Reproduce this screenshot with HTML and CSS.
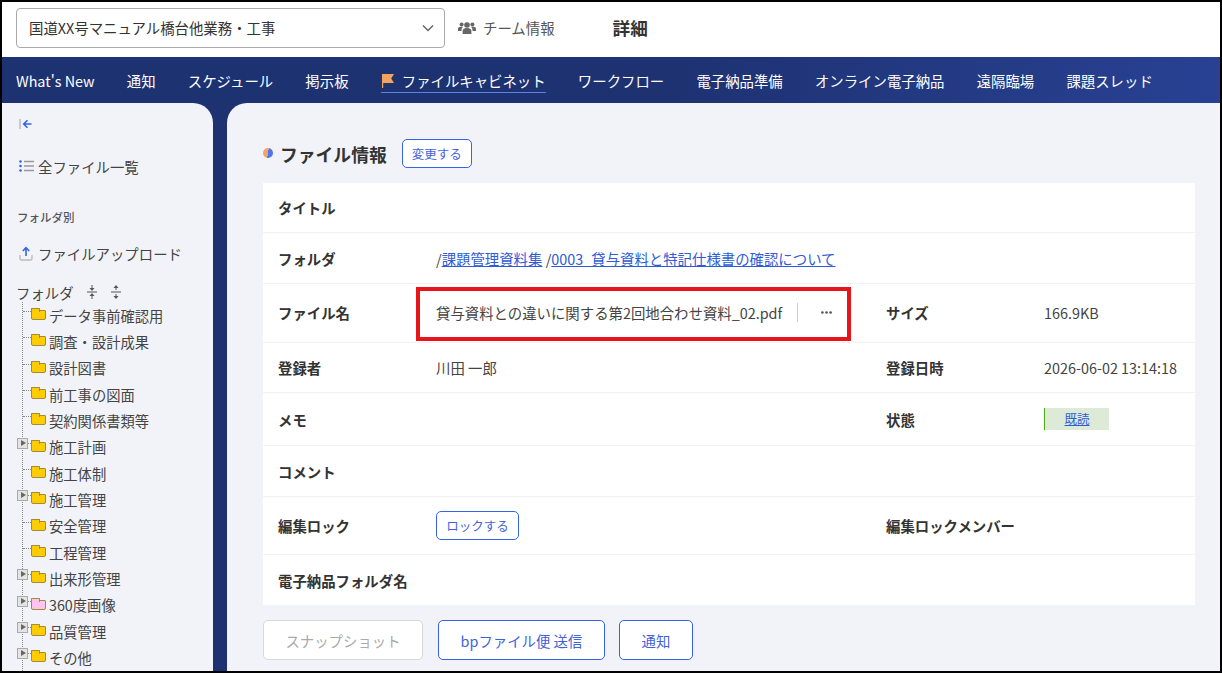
FILE: index.html
```html
<!DOCTYPE html>
<html lang="ja">
<head>
    <meta charset="UTF-8" />
    <title>詳細</title>
    <link rel="stylesheet" href="styles.css">
</head>
<body>
    <header class="topbar">
        <div class="project-select">
            <span>国道XX号マニュアル橋台他業務・工事</span>
            <svg class="chevron" width="12" height="8" viewBox="0 0 12 8"><path d="M1 1.500l5 5 5-5" fill="none" stroke="#666" stroke-width="1.500"/></svg>
        </div>
        <a class="team-link">
            <svg width="18" height="14" viewBox="0 0 18 14" fill="#666"><circle cx="9" cy="4" r="2.800"/><circle cx="3.600" cy="3.600" r="2"/><circle cx="14.400" cy="3.600" r="2"/><path d="M4.600 13V10c0-2 1.600-3 4.400-3s4.400 1 4.400 3v3z"/><path d="M0 10V8c0-1.300 1-2.200 3-2.200.7 0 1.300.1 1.800.3C3.900 6.900 3.500 8 3.500 10z"/><path d="M18 10V8c0-1.300-1-2.200-3-2.200-.7 0-1.300.1-1.800.3.900.8 1.300 1.900 1.300 3.900z"/></svg>
            チーム情報
        </a>
        <h1 class="page-title">詳細</h1>
    </header>

    <nav class="mainnav">
        <a>What's New</a>
        <a>通知</a>
        <a>スケジュール</a>
        <a>掲示板</a>
        <a class="active">
            <svg width="14" height="14" viewBox="0 0 14 14"><path d="M1 0h1.200v14H1z" fill="#f5a25d"/><path d="M2 0h11l-2.800 4.500L13 9H2z" fill="#f5a25d"/></svg>
            ファイルキャビネット
        </a>
        <a>ワークフロー</a>
        <a>電子納品準備</a>
        <a>オンライン電子納品</a>
        <a>遠隔臨場</a>
        <a>課題スレッド</a>
    </nav>

    <div class="content">
        <aside class="sidebar">
            <svg class="collapse" width="14" height="12" viewBox="0 0 14 12"><path d="M1 1v10" stroke="#bbb" stroke-width="1.500"/><path d="M12.500 6H5M8.500 2.200L4.700 6l3.800 3.800" fill="none" stroke="#3563e9" stroke-width="1.600"/></svg>

            <a class="side-link all-files">
                <svg width="15" height="12" viewBox="0 0 15 12"><g fill="#3563e9"><circle cx="1.500" cy="1.500" r="1.300"/><circle cx="1.500" cy="6" r="1.300"/><circle cx="1.500" cy="10.500" r="1.300"/></g><path d="M5 1.500h10M5 6h10M5 10.500h10" stroke="#999" stroke-width="1.300"/></svg>
                全ファイル一覧
            </a>

            <div class="side-heading">フォルダ別</div>

            <a class="side-link upload">
                <svg width="14" height="15" viewBox="0 0 14 15"><path d="M1 9v3.500c0 1 .6 1.500 1.500 1.500h9c.9 0 1.500-.5 1.500-1.500V9" fill="none" stroke="#bbb" stroke-width="1.400"/><path d="M7 10V2M3.800 5L7 1.600 10.200 5" fill="none" stroke="#3563e9" stroke-width="1.600"/></svg>
                ファイルアップロード
            </a>

            <div class="tree-head">
                フォルダ
                <svg width="12" height="14" viewBox="0 0 12 14"><path d="M1 7h10" stroke="#555"/><path d="M6 0v4M6 14v-4" stroke="#555"/><path d="M3.500 3L6 6l2.500-3zM3.500 11L6 8l2.500 3z" fill="#555"/></svg>
                <svg width="12" height="14" viewBox="0 0 12 14"><path d="M1 7h10" stroke="#555"/><path d="M6 2v3M6 12V9" stroke="#555"/><path d="M3.500 3L6 0l2.500 3zM3.500 11L6 14l2.500-3z" fill="#555"/></svg>
            </div>

            <ul class="tree">
                <li class="tree-item"><i class="folder"></i>データ事前確認用</li>
                <li class="tree-item"><i class="folder"></i>調査・設計成果</li>
                <li class="tree-item"><i class="folder"></i>設計図書</li>
                <li class="tree-item"><i class="folder"></i>前工事の図面</li>
                <li class="tree-item"><i class="folder"></i>契約関係書類等</li>
                <li class="tree-item"><i class="toggle"></i><i class="folder"></i>施工計画</li>
                <li class="tree-item"><i class="folder"></i>施工体制</li>
                <li class="tree-item"><i class="toggle"></i><i class="folder"></i>施工管理</li>
                <li class="tree-item"><i class="folder"></i>安全管理</li>
                <li class="tree-item"><i class="folder"></i>工程管理</li>
                <li class="tree-item"><i class="toggle"></i><i class="folder"></i>出来形管理</li>
                <li class="tree-item"><i class="toggle"></i><i class="folder pink"></i>360度画像</li>
                <li class="tree-item"><i class="toggle"></i><i class="folder"></i>品質管理</li>
                <li class="tree-item"><i class="toggle"></i><i class="folder"></i>その他</li>
            </ul>
        </aside>

        <main class="panel">
            <div class="section-head">
                <span class="dot"></span>
                <h2>ファイル情報</h2>
                <button class="btn btn-small">変更する</button>
            </div>

            <div class="info">
                <div class="row h49">
                    <div class="label">タイトル</div>
                </div>
                <div class="row h50">
                    <div class="label">フォルダ</div>
                    <div class="value span3">/<a href="#">課題管理資料集</a> /<a href="#">0003_貸与資料と特記仕様書の確認について</a></div>
                </div>
                <div class="row h58">
                    <div class="label">ファイル名</div>
                    <div class="value file-cell">
                        <span class="file-name">貸与資料との違いに関する第2回地合わせ資料_02.pdf</span>
                        <svg class="more" width="11" height="3" viewBox="0 0 11 3" fill="#555"><circle cx="1.400" cy="1.500" r="1.300"/><circle cx="5.500" cy="1.500" r="1.300"/><circle cx="9.600" cy="1.500" r="1.300"/></svg>
                        <span class="red-box"></span>
                    </div>
                    <div class="label">サイズ</div>
                    <div class="value">166.9KB</div>
                </div>
                <div class="row h49">
                    <div class="label">登録者</div>
                    <div class="value">川田 一郎</div>
                    <div class="label">登録日時</div>
                    <div class="value">2026-06-02 13:14:18</div>
                </div>
                <div class="row h52">
                    <div class="label">メモ</div>
                    <div class="value"></div>
                    <div class="label">状態</div>
                    <div class="value"><a class="status" href="#">既読</a></div>
                </div>
                <div class="row h50">
                    <div class="label">コメント</div>
                </div>
                <div class="row h57">
                    <div class="label">編集ロック</div>
                    <div class="value"><button class="btn btn-lock">ロックする</button></div>
                    <div class="label">編集ロックメンバー</div>
                </div>
                <div class="row h49 last">
                    <div class="label">電子納品フォルダ名</div>
                </div>
            </div>

            <div class="actions">
                <button class="btn btn-action snapshot">スナップショット</button>
                <button class="btn btn-action send">bpファイル便 送信</button>
                <button class="btn btn-action notify">通知</button>
            </div>
        </main>
    </div>
</body>
</html>
```

FILE: styles.css
```css
* {
    box-sizing: border-box;
}
html, body {
    margin: 0;
    height: 673px;
    overflow: hidden;
}
body {
    font-family: "Noto Sans CJK JP", "Noto Sans", sans-serif;
    font-size: 14.4px;
    color: #333;
    background: #fff;
    border: 2px solid #000;
    display: flex;
    flex-direction: column;
}
a {
    color: inherit;
    text-decoration: none;
}

/* top bar */
.topbar {
    height: 55px;
    flex: none;
    display: flex;
    align-items: center;
    padding: 0 0 4px 14px;
}
.project-select {
    width: 429px;
    height: 40px;
    border: 1px solid #aaa;
    border-radius: 4px;
    padding: 0 10px 0 12px;
    display: flex;
    align-items: center;
    justify-content: space-between;
}
.team-link {
    margin-left: 13px;
    display: flex;
    align-items: center;
    gap: 7px;
    color: #555;
}
.page-title {
    margin: 0 0 0 58px;
    font-size: 17.6px;
    font-weight: 700;
}

/* main navigation */
.mainnav {
    height: 46px;
    flex: none;
    display: flex;
    align-items: center;
    gap: 32.200px;
    padding: 0 0 0 14px;
    background: linear-gradient(90deg, #1d3271 0%, #1e3272 55%, #284193 100%);
    color: #fff;
}
.mainnav a.active {
    display: flex;
    align-items: center;
    gap: 7px;
    border-bottom: 1px solid #5c82e8;
    height: 24px;
    margin-top: 2px;
}

/* below nav */
.content {
    flex: 1;
    min-height: 0;
    display: flex;
    gap: 14px;
    background: #1e3272;
}
.sidebar {
    width: 211px;
    flex: none;
    background: #f1f3f8;
    border-top-right-radius: 20px;
    padding: 14px 0 0 15px;
    overflow: hidden;
}
.collapse {
    display: block;
    margin: 1px 0 0 2px;
}
.side-link {
    display: flex;
    align-items: center;
    gap: 4px;
    height: 20px;
    color: #444;
}
.all-files {
    margin: 26px 0 0 2px;
}
.side-heading {
    margin-top: 31px;
    height: 20px;
    line-height: 20px;
    font-size: 11.500px;
    font-weight: 500;
    color: #555;
}
.upload {
    margin: 16px 0 0 2px;
}
.upload svg {
    margin-right: 1px;
}
.tree-head {
    margin: 19px 0 0 -1px;
    height: 20px;
    display: flex;
    align-items: center;
    gap: 12px;
    color: #444;
}
.tree {
    list-style: none;
    margin: 0 0 0 5px;
    padding: 0 0 0 8px;
    border-left: 1px dotted #888;
}
.tree-item {
    height: 26.340px;
    display: flex;
    align-items: center;
    position: relative;
    font-size: 14.300px;
    color: #444;
    white-space: nowrap;
}
.tree-item::before {
    content: "";
    position: absolute;
    left: -8px;
    top: 9px;
    width: 8px;
    border-top: 1px dotted #888;
}
.toggle {
    position: absolute;
    left: -14px;
    top: 4px;
    width: 11px;
    height: 11px;
    border: 1px solid #aaa;
    background: #e4e4e4;
    z-index: 1;
}
.toggle::before {
    content: "";
    position: absolute;
    left: 2.500px;
    top: 1px;
    border-left: 5px solid #666;
    border-top: 3.500px solid transparent;
    border-bottom: 3.500px solid transparent;
}
.folder {
    width: 15px;
    height: 10px;
    margin: 0 3px 0 0;
    background: #ffcc00;
    border: 1px solid #a08c3c;
    border-radius: 0 1px 2px 2px;
    position: relative;
    flex: none;
}
.folder::before {
    content: "";
    position: absolute;
    left: -1px;
    top: -3px;
    width: 7px;
    height: 3px;
    background: #ffcc00;
    border: 1px solid #a08c3c;
    border-bottom: 0;
    border-radius: 1px 1px 0 0;
}
.folder.pink,
.folder.pink::before {
    background: #ffc4ee;
}

/* detail panel */
.panel {
    flex: 1;
    min-width: 0;
    background: #f1f3f8;
    border-top-left-radius: 20px;
    padding: 36px 25px 0 36px;
}
.section-head {
    height: 28px;
    display: flex;
    align-items: center;
    margin-bottom: 16px;
}
.dot {
    width: 10px;
    height: 10px;
    border-radius: 50%;
    background: linear-gradient(100deg, #f5a26b 0 50%, #4f76e8 50%);
}
.section-head h2 {
    margin: 1px 0 0 7px;
    font-size: 17.800px;
    font-weight: 700;
}
.btn {
    font-family: inherit;
    background: #fff;
    color: #3f63dc;
    border: 1px solid #3563e9;
    border-radius: 5px;
    padding: 0;
}
.btn-small {
    margin-left: 15px;
    width: 70px;
    height: 29px;
    font-size: 12.500px;
}
.info {
    background: #fff;
}
.row {
    display: grid;
    grid-template-columns: 173px 435px 173px 1fr;
    align-items: center;
    border-bottom: 1px solid #f1f1f3;
}
.row.last {
    border-bottom: 0;
}
.h49 { height: 50px; }
.h50 { height: 51px; }
.h52 { height: 53px; }
.h57 { height: 58px; }
.h58 {
    height: 59px;
    padding-bottom: 2px;
}
.label {
    padding-left: 15px;
    font-weight: 700;
    white-space: nowrap;
}
.value {
    color: #444;
}
.span3 {
    grid-column: span 3;
}
.value a {
    color: #2f5bd8;
    text-decoration: underline;
}
.file-cell {
    display: flex;
    align-items: center;
    position: relative;
    height: 100%;
}
.file-name {
    padding-right: 15px;
    border-right: 1px solid #ccc;
    line-height: 19px;
    white-space: nowrap;
}
.more {
    margin-left: 23px;
}
.red-box {
    position: absolute;
    left: -20px;
    top: 3px;
    width: 435px;
    height: 54px;
    border: 4px solid #e8141c;
}
.status {
    display: block;
    width: 65px;
    height: 22px;
    line-height: 22px;
    text-align: center;
    font-size: 12.500px;
    background: #deead8;
    border-left: 1px solid #4caf1a;
}
.btn-lock {
    width: 83px;
    height: 29px;
    font-size: 12.500px;
}
.actions {
    display: flex;
    gap: 15px;
    margin-top: 15px;
}
.btn-action {
    height: 40px;
    font-size: 14.400px;
}
.snapshot {
    width: 160px;
    color: #aaa;
    border-color: #d8d8d8;
}
.send {
    width: 167px;
}
.notify {
    width: 74px;
    margin-left: -1px;
}
```
